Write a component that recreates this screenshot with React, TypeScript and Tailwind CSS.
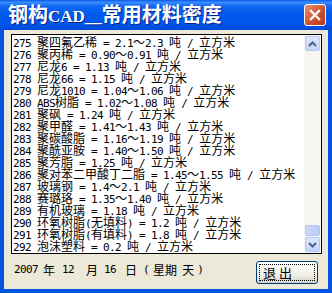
import React from "react";

const rows = [
  "275 聚四氟乙稀 = 2.1～2.3 吨 / 立方米",
  "276 聚丙稀 = 0.90～0.91 吨 / 立方米",
  "277 尼龙6 = 1.13 吨 / 立方米",
  "278 尼龙66 = 1.15 吨 / 立方米",
  "279 尼龙1010 = 1.04～1.06 吨 / 立方米",
  "280 ABS树脂 = 1.02～1.08 吨 / 立方米",
  "281 聚砜 = 1.24 吨 / 立方米",
  "282 聚甲醛 = 1.41～1.43 吨 / 立方米",
  "283 聚碳酸脂 = 1.16～1.19 吨 / 立方米",
  "284 聚酰亚胺 = 1.40～1.50 吨 / 立方米",
  "285 聚芳脂 = 1.25 吨 / 立方米",
  "286 聚对苯二甲酸丁二脂 = 1.45～1.55 吨 / 立方米",
  "287 玻璃钢 = 1.4～2.1 吨 / 立方米",
  "288 赛璐珞 = 1.35～1.40 吨 / 立方米",
  "289 有机玻璃 = 1.18 吨 / 立方米",
  "290 环氧树脂(无填料) = 1.2 吨 / 立方米",
  "291 环氧树脂(有填料) = 1.8 吨 / 立方米",
  "292 泡沫塑料 = 0.2 吨 / 立方米",
];

// half-width text in a mono face, full-width in the CJK face
function Mixed({ text, latin, cjk }: { text: string; latin: string; cjk: string }) {
  const parts = text.match(/[\x20-\x7e]+|[^\x20-\x7e]+/g) ?? [];
  return (
    <>
      {parts.map((p, i) =>
        /^[\x20-\x7e]/.test(p) ? (
          <span key={i} className={latin}>
            {p}
          </span>
        ) : (
          <span key={i} className={cjk}>
            {p}
          </span>
        )
      )}
    </>
  );
}

const LATIN = "font-['DejaVu_Sans_Mono',monospace] text-[11px] tracking-[-0.62px]";
const CJK = "font-['Noto_Sans_CJK_SC',sans-serif] text-[12px]";

function ScrollButton({ up }: { up?: boolean }) {
  return (
    <div className="h-[17px] w-[17px] p-[1px]">
      <div className="h-full w-full rounded-[2px] border border-[#B5C8F3] bg-[linear-gradient(to_bottom,#DCE6FD,#C3D4FC)] flex items-center justify-center">
        <svg width="9" height="6" viewBox="0 0 9 6">
          {up ? (
            <polyline points="1,5 4.5,1.5 8,5" fill="none" stroke="#4D6185" strokeWidth="2" />
          ) : (
            <polyline points="1,1 4.5,4.5 8,1" fill="none" stroke="#4D6185" strokeWidth="2" />
          )}
        </svg>
      </div>
    </div>
  );
}

export default function App() {
  return (
    <div className="w-[332px] h-[293px] flex flex-col bg-[#0553E1] overflow-hidden">
      <div className="h-[30px] shrink-0 flex items-center justify-between pl-[8px] pr-[6px] bg-[linear-gradient(to_bottom,#0A5BE6_0%,#3A8DFF_8%,#1068F2_20%,#0058EE_50%,#0055E8_80%,#0049D8_100%)]">
        <div className="text-white font-bold whitespace-pre leading-[26px] [text-shadow:1px_1px_0_#0A1E8C]">
          <Mixed
            text="钢构CAD__常用材料密度"
            latin="font-['Liberation_Serif',serif] text-[17px]"
            cjk="font-['Noto_Sans_CJK_SC',sans-serif] text-[20px]"
          />
        </div>
        <div className="w-[22px] h-[22px] rounded-[3px] border border-white bg-[linear-gradient(135deg,#E9927A,#D0522C_55%,#B8371A)] flex items-center justify-center">
          <svg width="12" height="12" viewBox="0 0 12 12">
            <path d="M2 2 L10 10 M10 2 L2 10" stroke="white" strokeWidth="2.4" strokeLinecap="square" />
          </svg>
        </div>
      </div>

      <div className="flex-1 flex px-[4px] pb-[4px]">
        <div className="flex-1 bg-[#ECE9D8] flex flex-col">
          <div className="mt-[4px] ml-[7px] w-[311px] h-[220px] border border-black bg-white flex">
            <div className="flex-1 overflow-hidden pl-[1px]">
              {rows.map((r) => (
                <div key={r} className="h-[12px] leading-[12px] whitespace-pre text-black">
                  <Mixed text={r} latin={LATIN} cjk={CJK} />
                </div>
              ))}
            </div>
            <div className="w-[17px] flex flex-col bg-[#F7F6F1]">
              <ScrollButton up />
              <div className="flex-1 flex flex-col justify-end">
                <div className="h-[11px] mx-[1px] rounded-[2px] border border-[#B5C8F3] bg-[linear-gradient(to_right,#C9D8FC,#BACCF8)]" />
              </div>
              <ScrollButton />
            </div>
          </div>

          <div className="flex items-start justify-between pl-[10px] pr-[10px] mt-[7px]">
            <div className="flex items-center h-[12px] leading-[12px] mt-[3px] whitespace-pre text-black">
              <span className={LATIN}>2007</span>
              <span className={CJK + " ml-[5px]"}>年</span>
              <span className={LATIN + " ml-[7px]"}>12</span>
              <span className={CJK + " ml-[12px]"}>月</span>
              <span className={LATIN + " ml-[6px]"}>16</span>
              <span className={CJK + " ml-[9px]"}>日</span>
              <span className={LATIN + " ml-[6px]"}>(</span>
              <span className={CJK + " ml-[4px]"}>星期</span>
              <span className={CJK + " ml-[5px]"}>天</span>
              <span className={LATIN + " ml-[3px]"}>)</span>
            </div>
            <div className="w-[62px] h-[23px] rounded-[3px] border border-[#003C74] bg-[linear-gradient(to_bottom,#FFFFFF,#F0F0EA_60%,#D6D0C5)] p-[2px]">
              <div className="h-full w-full border border-dotted border-black flex items-center pl-[3px] whitespace-pre text-black">
                <span className="font-['Noto_Sans_CJK_SC',sans-serif] text-[13px] leading-[13px]">退 出</span>
              </div>
            </div>
          </div>
        </div>
      </div>
    </div>
  );
}
